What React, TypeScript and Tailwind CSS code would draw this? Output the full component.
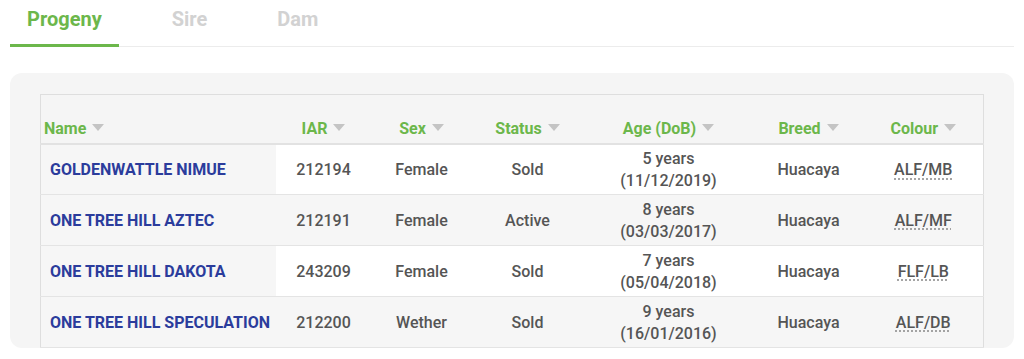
import React from 'react';

type Animal = {
  name: string;
  iar: string;
  sex: string;
  status: string;
  age: string;
  dob: string;
  breed: string;
  colour: string;
};

const animals: Animal[] = [
  { name: 'GOLDENWATTLE NIMUE', iar: '212194', sex: 'Female', status: 'Sold', age: '5 years', dob: '(11/12/2019)', breed: 'Huacaya', colour: 'ALF/MB' },
  { name: 'ONE TREE HILL AZTEC', iar: '212191', sex: 'Female', status: 'Active', age: '8 years', dob: '(03/03/2017)', breed: 'Huacaya', colour: 'ALF/MF' },
  { name: 'ONE TREE HILL DAKOTA', iar: '243209', sex: 'Female', status: 'Sold', age: '7 years', dob: '(05/04/2018)', breed: 'Huacaya', colour: 'FLF/LB' },
  { name: 'ONE TREE HILL SPECULATION', iar: '212200', sex: 'Wether', status: 'Sold', age: '9 years', dob: '(16/01/2016)', breed: 'Huacaya', colour: 'ALF/DB' },
];

const columns = [
  { label: 'Name', width: 'w-[235px]', align: 'text-left pl-[3px]' },
  { label: 'IAR', width: 'w-[96px]', align: 'text-center' },
  { label: 'Sex', width: 'w-[100px]', align: 'text-center' },
  { label: 'Status', width: 'w-[112px]', align: 'text-center' },
  { label: 'Age (DoB)', width: 'w-[170px]', align: 'text-center' },
  { label: 'Breed', width: 'w-[110px]', align: 'text-center' },
  { label: 'Colour', width: 'w-[120px]', align: 'text-center' },
];

const SortArrow = () => (
  <svg width="12" height="7" viewBox="0 0 12 7" className="inline-block ml-[6px] mb-[3px]">
    <path d="M0 0 L12 0 L6 7 Z" fill="#c4c4c4" />
  </svg>
);

export default function App() {
  return (
    <div className="w-[1024px] h-[359px] bg-white overflow-hidden font-['Roboto',sans-serif]">
      {/* tabs */}
      <div className="mx-[10px] flex items-end border-b border-[#ececec] h-[47px]">
        <div className="px-[17px] h-[46px] flex items-center pb-[8px] border-b-[3px] border-[#6cb74b] text-[#6cb74b] text-[20px] font-bold -mb-px">
          Progeny
        </div>
        <div className="ml-9 px-[17px] h-[46px] flex items-center pb-[8px] text-[#d2d2d2] text-[20px] font-bold">
          Sire
        </div>
        <div className="ml-9 px-[17px] h-[46px] flex items-center pb-[8px] text-[#d2d2d2] text-[20px] font-bold">
          Dam
        </div>
      </div>

      {/* card */}
      <div className="mx-[10px] mt-[26px] bg-[#f5f5f5] rounded-[12px] pt-[21px] pl-[30px] pr-[31px] h-[275px]">
        <table className="w-[942px] border-collapse table-fixed border border-[#dedede] text-[16px] leading-[22px]">
          <thead>
            <tr className="bg-[#f5f5f5] border-b-2 border-[#e2e2e2]">
              {columns.map((c) => (
                <th
                  key={c.label}
                  className={`${c.width} ${c.align} h-[49px] align-bottom pb-[3px] font-bold text-[#6cb74b] whitespace-nowrap`}
                >
                  {c.label}
                  <SortArrow />
                </th>
              ))}
            </tr>
          </thead>
          <tbody>
            {animals.map((a, i) => (
              <tr
                key={a.name}
                className={`border-b border-[#e4e4e4] h-[51px] font-medium text-[#555555] ${i % 2 === 1 ? 'bg-[#f6f6f6]' : 'bg-white'}`}
              >
                <td className="pl-[9px] pt-[2px] bg-[#f6f6f6] font-bold text-[#2b3c9c] whitespace-nowrap">{a.name}</td>
                <td className="pt-[2px] text-center">{a.iar}</td>
                <td className="pt-[2px] text-center">{a.sex}</td>
                <td className="pt-[2px] text-center">{a.status}</td>
                <td className="pt-[2px] text-center">
                  <div>{a.age}</div>
                  <div>{a.dob}</div>
                </td>
                <td className="pt-[2px] text-center">{a.breed}</td>
                <td className="pt-[2px] text-center">
                  <abbr title={a.colour} className="underline decoration-dotted decoration-[#888] underline-offset-[3px]">
                    {a.colour}
                  </abbr>
                </td>
              </tr>
            ))}
          </tbody>
        </table>
      </div>
    </div>
  );
}
